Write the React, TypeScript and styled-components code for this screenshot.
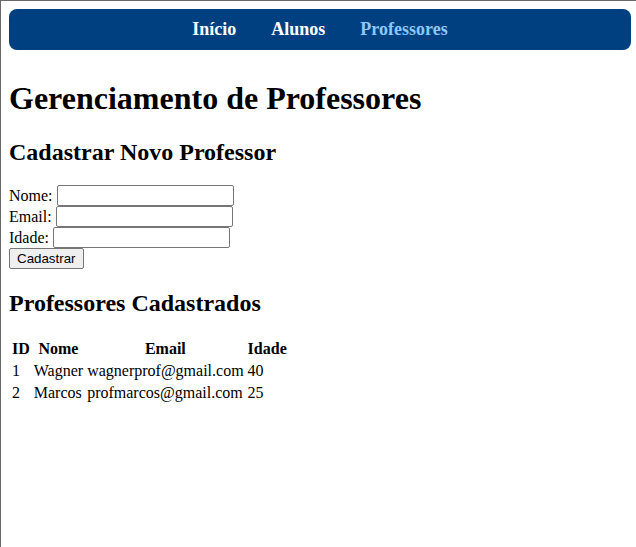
import React from "react";
import styled, { createGlobalStyle } from "styled-components";

const Global = createGlobalStyle`
  html {
    border-top: 1px solid #6a6a6a;
    border-left: 1px solid #6a6a6a;
    min-height: 100vh;
    box-sizing: border-box;
  }
  body {
    margin: 8px 5px 8px 8px;
    font-family: "Liberation Serif", "Times New Roman", serif;
    font-size: 16px;
    color: #000;
    background: #fff;
  }
`;

const NavBar = styled.nav`
  background: #004080;
  border-radius: 8px;
  height: 41px;
  display: flex;
  align-items: center;
  justify-content: center;
  gap: 35px;
  margin-bottom: 30px;
`;

const NavLink = styled.a<{ $active?: boolean }>`
  font-family: "Liberation Serif", "Times New Roman", serif;
  font-weight: bold;
  font-size: 18px;
  color: ${(p) => (p.$active ? "#8cc8ff" : "#ffffff")};
  text-decoration: none;
`;

const Title = styled.h1`
  font-size: 32px;
  margin: 0 0 21px;
  line-height: 37px;
`;

const Section = styled.h2`
  font-size: 24px;
  margin: 20px 0;
  line-height: 28px;
`;

const Form = styled.form`
  display: flex;
  flex-direction: column;
  align-items: flex-start;
  margin-top: -1px;
`;

const Row = styled.label`
  display: flex;
  align-items: center;
  height: 21px;
  line-height: 18px;
`;

const Input = styled.input`
  font-family: Arial, "Liberation Sans", sans-serif;
  font-size: 13.33px;
  width: 177px;
  height: 21px;
  box-sizing: border-box;
  padding: 2px 3px;
  border: 1px solid #767676;
  border-radius: 2px;
  margin: 0 0 0 4px;
`;

const Button = styled.button`
  font-family: Arial, "Liberation Sans", sans-serif;
  font-size: 13.33px;
  height: 21px;
  box-sizing: border-box;
  padding: 0 7px;
  background: #efefef;
  border: 1px solid #767676;
  border-radius: 2px;
  color: #000;
`;

const Table = styled.table`
  border-spacing: 2px;
`;

const Th = styled.th`
  padding: 1px;
  font-weight: bold;
  text-align: center;
`;

const Td = styled.td`
  padding: 1px;
`;

const teachers = [
  { id: 1, nome: "Wagner", email: "wagnerprof@gmail.com", idade: 40 },
  { id: 2, nome: "Marcos", email: "profmarcos@gmail.com", idade: 25 },
];

export default function App() {
  return (
    <>
      <Global />
      <NavBar>
        <NavLink href="#">Início</NavLink>
        <NavLink href="#">Alunos</NavLink>
        <NavLink href="#" $active>
          Professores
        </NavLink>
      </NavBar>
      <Title>Gerenciamento de Professores</Title>
      <Section>Cadastrar Novo Professor</Section>
      <Form onSubmit={(e) => e.preventDefault()}>
        <Row>
          Nome:<Input type="text" />
        </Row>
        <Row>
          Email:<Input type="email" />
        </Row>
        <Row>
          Idade:<Input type="number" />
        </Row>
        <Button type="submit">Cadastrar</Button>
      </Form>
      <Section>Professores Cadastrados</Section>
      <Table>
        <thead>
          <tr>
            <Th>ID</Th>
            <Th>Nome</Th>
            <Th>Email</Th>
            <Th>Idade</Th>
          </tr>
        </thead>
        <tbody>
          {teachers.map((t) => (
            <tr key={t.id}>
              <Td>{t.id}</Td>
              <Td>{t.nome}</Td>
              <Td>{t.email}</Td>
              <Td>{t.idade}</Td>
            </tr>
          ))}
        </tbody>
      </Table>
    </>
  );
}
